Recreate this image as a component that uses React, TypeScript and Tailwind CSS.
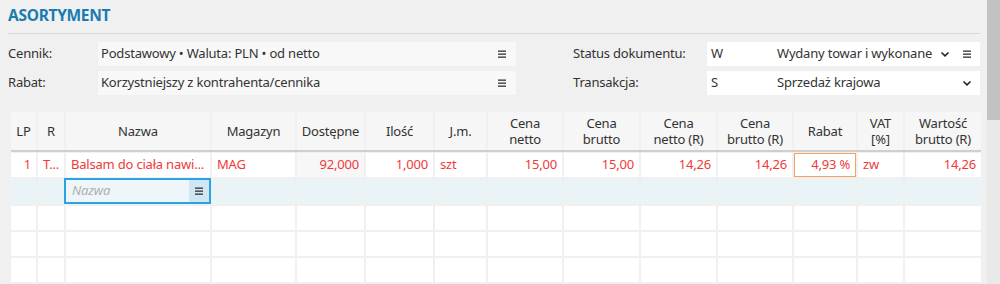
import React from 'react';

type Col = { label: string[]; w: string; align: string };

const cols: Col[] = [
  { label: ['LP'], w: 'w-[25px]', align: 'text-right' },
  { label: ['R'], w: 'w-[26px]', align: 'text-left' },
  { label: ['Nazwa'], w: 'w-[144px]', align: 'text-left' },
  { label: ['Magazyn'], w: 'w-[83px]', align: 'text-left' },
  { label: ['Dostępne'], w: 'w-[67px]', align: 'text-right' },
  { label: ['Ilość'], w: 'w-[67px]', align: 'text-right' },
  { label: ['J.m.'], w: 'w-[51px]', align: 'text-left' },
  { label: ['Cena', 'netto'], w: 'w-[74px]', align: 'text-right' },
  { label: ['Cena', 'brutto'], w: 'w-[75px]', align: 'text-right' },
  { label: ['Cena', 'netto (R)'], w: 'w-[75px]', align: 'text-right' },
  { label: ['Cena', 'brutto (R)'], w: 'w-[74px]', align: 'text-right' },
  { label: ['Rabat'], w: 'w-[62px]', align: 'text-right' },
  { label: ['VAT', '[%]'], w: 'w-[45px]', align: 'text-left' },
  { label: ['Wartość', 'brutto (R)'], w: 'w-[76px]', align: 'text-right' },
];

const row1 = ['1', 'T...', 'Balsam do ciała nawi...', 'MAG', '92,000', '1,000', 'szt', '15,00', '15,00', '14,26', '14,26', '4,93 %', 'zw', '14,26'];

const Burger = () => (
  <svg width="10" height="10" viewBox="0 0 10 10" className="shrink-0">
    <rect x="1" y="1.5" width="8" height="1.3" fill="#333" />
    <rect x="1" y="4.5" width="8" height="1.3" fill="#333" />
    <rect x="1" y="7.5" width="8" height="1.3" fill="#333" />
  </svg>
);

const Chevron = () => (
  <svg width="10" height="10" viewBox="0 0 10 10" className="shrink-0">
    <path d="M1.5 3.5 L5 6.8 L8.5 3.5" fill="none" stroke="#222" strokeWidth="1.6" />
  </svg>
);

const App: React.FC = () => {
  return (
    <div className="flex w-[1000px] h-[284px] overflow-hidden bg-[#f0f0f0] text-[13px] tracking-[-0.2px] text-[#333]" style={{ fontFamily: '"Noto Sans", sans-serif' }}>
      <div className="w-[987px] pl-2 pr-[7px]">
        <h1 className="pt-[5px] pb-[8px] text-[15.5px] tracking-[-0.3px] font-bold text-[#1a7bb2] leading-[20px]">ASORTYMENT</h1>
        <div className="h-px bg-[#d9d9d9] w-[972px]" />

        <div className="mt-[8px] flex flex-col gap-[5px] w-[972px]">
          <div className="flex items-center h-[24px]">
            <div className="w-[90px]">Cennik:</div>
            <div className="flex items-center w-[418px] h-full bg-[#f8f8f8] pl-[3px] pr-[9px]">
              <span className="flex-1">Podstawowy • Waluta: PLN • od netto</span>
              <Burger />
            </div>
            <div className="w-[57px]" />
            <div className="w-[134px]">Status dokumentu:</div>
            <div className="flex items-center w-[273px] h-full bg-white pl-[4px] pr-[8px]">
              <span className="w-[66px]">W</span>
              <span className="flex-1 whitespace-nowrap">Wydany towar i wykonane</span>
              <span className="ml-[4px] mr-[12px]"><Chevron /></span>
              <Burger />
            </div>
          </div>
          <div className="flex items-center h-[24px]">
            <div className="w-[90px]">Rabat:</div>
            <div className="flex items-center w-[418px] h-full bg-[#f8f8f8] pl-[3px] pr-[9px]">
              <span className="flex-1">Korzystniejszy z kontrahenta/cennika</span>
              <Burger />
            </div>
            <div className="w-[57px]" />
            <div className="w-[134px]">Transakcja:</div>
            <div className="flex items-center w-[273px] h-full bg-white pl-[4px] pr-[8px]">
              <span className="w-[66px]">S</span>
              <span className="flex-1">Sprzedaż krajowa</span>
              <Chevron />
            </div>
          </div>
        </div>

        <div className="mt-[17px] ml-[3px] w-[970px]">
          <div className="flex gap-[2px] h-[40px] border-b-2 border-[#cfcfcf]">
            {cols.map((c, i) => (
              <div key={i} className={`${c.w} shrink-0 bg-[#f6f6f6] flex flex-col items-center justify-center leading-[16px] text-[#333]`}>
                {c.label.map((l, j) => (
                  <span key={j}>{l}</span>
                ))}
              </div>
            ))}
          </div>

          <div className="mt-[1px] flex gap-[2px] h-[24px] text-[#f03a3a]">
            {cols.map((c, i) => (
              <div
                key={i}
                className={`${c.w} shrink-0 flex items-center px-[5px] ${c.align} ${i === 4 ? 'bg-[#f7f7f7]' : 'bg-white'} ${i === 11 ? 'border border-[#f5a25d]' : ''} ${c.align === 'text-right' ? 'justify-end' : 'justify-start'}`}
              >
                <span className="whitespace-nowrap">{row1[i]}</span>
              </div>
            ))}
          </div>

          <div className="mt-[2px] flex gap-[2px] h-[25px]">
            {cols.map((c, i) =>
              i === 2 ? (
                <div key={i} className={`${c.w} shrink-0 relative`}>
                  <div className="absolute -left-[2px] -right-[1px] -top-[1px] bottom-0 flex border-2 border-[#2ba3e0] bg-[#eef6fa]">
                    <span className="flex-1 flex items-center pl-[6px] italic text-[#b0b0b0]">Nazwa</span>
                    <span className="w-[20px] flex items-center justify-center bg-[#cfe6f3]">
                      <Burger />
                    </span>
                  </div>
                </div>
              ) : (
                <div key={i} className={`${c.w} shrink-0 bg-[#eaf4f7]`} />
              )
            )}
          </div>

          {[0, 1, 2].map((r) => (
            <div key={r} className="mt-[2px] flex gap-[2px] h-[24px]">
              {cols.map((c, i) => (
                <div key={i} className={`${c.w} shrink-0 bg-white`} />
              ))}
            </div>
          ))}
        </div>
      </div>
      <div className="w-[13px] h-full bg-[#e9e9e9]">
        <div className="h-[120px] bg-[#c2c2c2]" />
      </div>
    </div>
  );
};

export default App;
